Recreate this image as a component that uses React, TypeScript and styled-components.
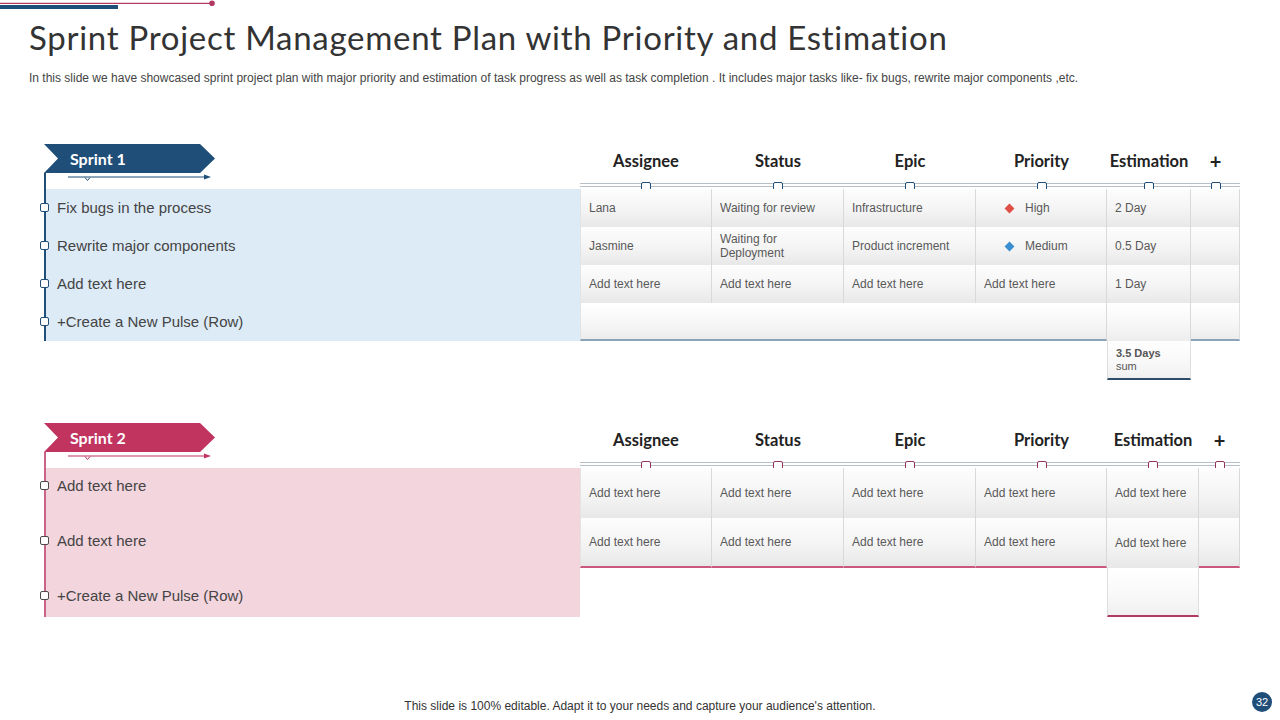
import React from 'react';
import styled, { createGlobalStyle } from 'styled-components';

const GlobalStyle = createGlobalStyle`
  html, body { margin: 0; padding: 0; background: #ffffff; }
  body { font-family: "Liberation Sans", Arial, sans-serif; }
  * { box-sizing: border-box; }
`;

type Accent = {
  main: string;
  line: string;
  bg: string;
  knob: string;
  listKnob: string;
  bottom: string;
  endLine: string;
};

const blue: Accent = {
  main: '#1f4e79',
  line: '#1f4e79',
  bg: '#ddebf7',
  knob: '#1f4e79',
  listKnob: '#1f4e79',
  bottom: '#8aa3b9',
  endLine: '#2d4d6b',
};

const pink: Accent = {
  main: '#c0345f',
  line: '#c96487',
  bg: '#f3d5de',
  knob: '#93345a',
  listKnob: '#4a4a4a',
  bottom: '#c9587c',
  endLine: '#b13a62',
};

const Page = styled.div`
  width: 1280px;
  height: 720px;
  overflow: hidden;
  display: flex;
  flex-direction: column;
  background: #fff;
`;

const Decor = styled.svg`
  display: block;
  flex: none;
`;

const Title = styled.h1`
  margin: 7px 0 0 29px;
  font-family: "Lato", "Liberation Sans", sans-serif;
  font-weight: 400;
  font-size: 33px;
  line-height: 40px;
  letter-spacing: 0.72px;
  color: #333333;
  white-space: nowrap;
`;

const Subtitle = styled.p`
  margin: 13px 0 0 29px;
  font-size: 12px;
  line-height: 16px;
  color: #444;
  white-space: nowrap;
`;

const Section = styled.section<{ $top: number }>`
  display: grid;
  grid-template-columns: 536px 660px;
  align-items: start;
  margin: ${(p) => p.$top}px 0 0 44px;
`;

const LeftCol = styled.div`
  display: flex;
  flex-direction: column;
`;

const Banner = styled.div<{ $color: string }>`
  width: 171px;
  height: 29px;
  background: ${(p) => p.$color};
  clip-path: polygon(0 0, 156px 0, 171px 50%, 156px 100%, 0 100%, 14px 50%);
  color: #fff;
  font-family: "Lato", "Liberation Sans", sans-serif;
  font-weight: 700;
  font-size: 16px;
  display: flex;
  align-items: center;
  padding-left: 26px;
`;

const Track = styled.div<{ $color: string }>`
  border-left: 2px solid ${(p) => p.$color};
`;

const PointerSvg = styled.svg`
  display: block;
`;

const List = styled.div<{ $bg: string }>`
  background: ${(p) => p.$bg};
`;

const ListRow = styled.div<{ $h: number }>`
  position: relative;
  height: ${(p) => p.$h}px;
  padding-left: 11px;
`;

const ListLabel = styled.div<{ $lh: number }>`
  font-size: 15px;
  line-height: ${(p) => p.$lh}px;
  color: #444;
`;

const ListKnob = styled.span<{ $color: string; $lh: number }>`
  position: absolute;
  left: -6px;
  top: ${(p) => p.$lh / 2 - 5}px;
  width: 9px;
  height: 9px;
  border: 1.5px solid ${(p) => p.$color};
  border-radius: 2px;
  background: #fff;
`;

const RightCol = styled.div`
  display: flex;
  flex-direction: column;
`;

const HeadRow = styled.div<{ $cols: string }>`
  display: grid;
  grid-template-columns: ${(p) => p.$cols};
  height: 38px;
`;

const HeadLabel = styled.div<{ $plus?: boolean }>`
  text-align: center;
  line-height: 34px;
  font-family: "Lato", "Liberation Sans", sans-serif;
  font-weight: 700;
  font-size: ${(p) => (p.$plus ? '20px' : '16.5px')};
  color: #222;
`;

const Rule = styled.div<{ $cols: string }>`
  display: grid;
  grid-template-columns: ${(p) => p.$cols};
  height: 7px;
  background: linear-gradient(
    to bottom,
    transparent 0,
    transparent 1px,
    #b8bec6 1px,
    #b8bec6 2px,
    transparent 2px,
    transparent 4px,
    #b8bec6 4px,
    #b8bec6 5px,
    transparent 5px
  );
`;

const RuleSlot = styled.div`
  display: flex;
  align-items: center;
  justify-content: center;
`;

const Knob = styled.span<{ $color: string }>`
  flex: none;
  width: 10px;
  height: 9px;
  border: 1.5px solid ${(p) => p.$color};
  border-radius: 2px;
  background: #fff;
`;

const Table = styled.div<{ $cols: string; $rows: string }>`
  display: grid;
  grid-template-columns: ${(p) => p.$cols};
  grid-template-rows: ${(p) => p.$rows};
`;

const Cell = styled.div<{ $bottom?: string; $first?: boolean }>`
  display: flex;
  align-items: center;
  padding: 0 7px 0 8px;
  font-size: 12px;
  line-height: 14px;
  color: #595959;
  background: linear-gradient(180deg, #fdfdfd 0%, #f4f4f4 55%, #e8e8e8 100%);
  border-right: 1px solid #d9d9d9;
  border-left: ${(p) => (p.$first ? '1px solid #e3e3e3' : '0')};
  border-bottom: ${(p) => (p.$bottom ? `2px solid ${p.$bottom}` : '0')};
`;

const PriorityCell = styled(Cell)`
  padding-left: 30px;
  gap: 12px;
`;

const Diamond = styled.span<{ $color: string }>`
  width: 7px;
  height: 7px;
  background: ${(p) => p.$color};
  transform: rotate(45deg);
`;

const WideCell = styled.div<{ $bottom: string }>`
  grid-column: span 4;
  background: linear-gradient(180deg, #ffffff 0%, #f6f6f6 60%, #ececec 100%);
  border-right: 1px solid #d9d9d9;
  border-left: 1px solid #e3e3e3;
  border-bottom: 2px solid ${(p) => p.$bottom};
`;

const EstCell = styled.div`
  background: linear-gradient(180deg, #ffffff 0%, #f6f6f6 60%, #ededed 100%);
  border-right: 1px solid #d9d9d9;
`;

const EdgeCell = styled.div<{ $bottom: string }>`
  background: linear-gradient(180deg, #ffffff 0%, #f6f6f6 60%, #ececec 100%);
  border-right: 1px solid #e0e0e0;
  border-bottom: 2px solid ${(p) => p.$bottom};
`;

const Blank = styled.div<{ $span?: number }>`
  grid-column: span ${(p) => p.$span ?? 1};
`;

const SumCell = styled.div<{ $bottom: string }>`
  display: flex;
  flex-direction: column;
  justify-content: center;
  padding: 0 8px;
  font-size: 11px;
  line-height: 13px;
  color: #555;
  background: linear-gradient(180deg, #ffffff 0%, #f8f8f8 60%, #f0f0f0 100%);
  border-left: 1px solid #dedede;
  border-right: 1px solid #dedede;
  border-bottom: 2px solid ${(p) => p.$bottom};
`;

const SumValue = styled.span`
  font-weight: 700;
`;

const Footer = styled.footer`
  display: grid;
  grid-template-columns: 1fr auto 1fr;
  align-items: start;
  margin-top: 75px;
  height: 28px;
`;

const FooterText = styled.p`
  grid-column: 2;
  margin: 6px 0 0;
  font-size: 12px;
  line-height: 16px;
  color: #333;
  white-space: nowrap;
`;

const PageBadge = styled.div`
  grid-column: 3;
  justify-self: end;
  margin-right: 8px;
  width: 20px;
  height: 20px;
  border-radius: 50%;
  background: #1f4e79;
  color: #fff;
  font-size: 11px;
  display: flex;
  align-items: center;
  justify-content: center;
`;

const Pointer = ({ color }: { color: string }) => (
  <PointerSvg width="180" height="16" viewBox="0 0 180 16">
    <line x1="22" y1="4" x2="160" y2="4" stroke={color} strokeWidth="1.2" />
    <path d="M158 1.6 L165 4 L158 6.4 Z" fill={color} />
    <path d="M39 4.5 L41.5 7.5 L44 4.5" fill="none" stroke={color} strokeWidth="1" />
  </PointerSvg>
);

const headers = ['Assignee', 'Status', 'Epic', 'Priority', 'Estimation'];

const Header = ({ cols, accent }: { cols: string; accent: Accent }) => (
  <>
    <HeadRow $cols={cols}>
      {headers.map((h) => (
        <HeadLabel key={h}>{h}</HeadLabel>
      ))}
      <HeadLabel $plus>+</HeadLabel>
    </HeadRow>
    <Rule $cols={cols}>
      {[0, 1, 2, 3, 4, 5].map((i) => (
        <RuleSlot key={i}>
          <Knob $color={accent.knob} />
        </RuleSlot>
      ))}
    </Rule>
  </>
);

type Item = { text: string; h: number; lh: number };

const SideList = ({ accent, title, items }: { accent: Accent; title: string; items: Item[] }) => (
  <LeftCol>
    <Banner $color={accent.main}>{title}</Banner>
    <Track $color={accent.line}>
      <Pointer color={accent.main} />
      <List $bg={accent.bg}>
        {items.map((it, i) => (
          <ListRow key={i} $h={it.h}>
            <ListKnob $color={accent.listKnob} $lh={it.lh} />
            <ListLabel $lh={it.lh}>{it.text}</ListLabel>
          </ListRow>
        ))}
      </List>
    </Track>
  </LeftCol>
);

const cols1 = '132px 132px 132px 131px 84px 49px';
const cols2 = '132px 132px 132px 131px 92px 41px';

export default function App() {
  return (
    <Page>
      <GlobalStyle />
      <Decor width="220" height="10" viewBox="0 0 220 10">
        <line x1="0" y1="3.3" x2="212" y2="3.3" stroke="#b23a63" strokeWidth="1.3" />
        <circle cx="212" cy="3.3" r="2.8" fill="#b23a63" />
        <rect x="0" y="5" width="118" height="4" fill="#1f4e79" />
      </Decor>
      <Title>Sprint Project Management Plan with Priority and Estimation</Title>
      <Subtitle>
        In this slide we have showcased sprint project plan with major priority and estimation of task progress as
        well as task completion . It includes major tasks like- fix bugs, rewrite major components ,etc.
      </Subtitle>

      <Section $top={58}>
        <SideList
          accent={blue}
          title="Sprint 1"
          items={[
            { text: 'Fix bugs in the process', h: 38, lh: 38 },
            { text: 'Rewrite major components', h: 38, lh: 38 },
            { text: 'Add text here', h: 38, lh: 38 },
            { text: '+Create a New Pulse (Row)', h: 38, lh: 38 },
          ]}
        />
        <RightCol>
          <Header cols={cols1} accent={blue} />
          <Table $cols={cols1} $rows="38px 38px 38px 38px 39px">
            <Cell $first>Lana</Cell>
            <Cell>Waiting for review</Cell>
            <Cell>Infrastructure</Cell>
            <PriorityCell>
              <Diamond $color="#df4f46" />
              High
            </PriorityCell>
            <Cell>2 Day</Cell>
            <Cell />

            <Cell $first>Jasmine</Cell>
            <Cell>
              Waiting for
              <br />
              Deployment
            </Cell>
            <Cell>Product increment</Cell>
            <PriorityCell>
              <Diamond $color="#3b8fd0" />
              Medium
            </PriorityCell>
            <Cell>0.5 Day</Cell>
            <Cell />

            <Cell $first>Add text here</Cell>
            <Cell>Add text here</Cell>
            <Cell>Add text here</Cell>
            <Cell>Add text here</Cell>
            <Cell>1 Day</Cell>
            <Cell />

            <WideCell $bottom={blue.bottom} />
            <EstCell />
            <EdgeCell $bottom={blue.bottom} />

            <Blank $span={4} />
            <SumCell $bottom={blue.endLine}>
              <SumValue>3.5 Days</SumValue>
              <span>sum</span>
            </SumCell>
            <Blank />
          </Table>
        </RightCol>
      </Section>

      <Section $top={43}>
        <SideList
          accent={pink}
          title="Sprint 2"
          items={[
            { text: 'Add text here', h: 55, lh: 36 },
            { text: 'Add text here', h: 55, lh: 36 },
            { text: '+Create a New Pulse (Row)', h: 39, lh: 36 },
          ]}
        />
        <RightCol>
          <Header cols={cols2} accent={pink} />
          <Table $cols={cols2} $rows="50px 50px 49px">
            <Cell $first>Add text here</Cell>
            <Cell>Add text here</Cell>
            <Cell>Add text here</Cell>
            <Cell>Add text here</Cell>
            <Cell>Add text here</Cell>
            <Cell />

            <Cell $first $bottom={pink.bottom}>Add text here</Cell>
            <Cell $bottom={pink.bottom}>Add text here</Cell>
            <Cell $bottom={pink.bottom}>Add text here</Cell>
            <Cell $bottom={pink.bottom}>Add text here</Cell>
            <Cell>Add text here</Cell>
            <Cell $bottom={pink.bottom} />

            <Blank $span={4} />
            <SumCell $bottom={pink.endLine} />
            <Blank />
          </Table>
        </RightCol>
      </Section>

      <Footer>
        <FooterText>This slide is 100% editable. Adapt it to your needs and capture your audience's attention.</FooterText>
        <PageBadge>32</PageBadge>
      </Footer>
    </Page>
  );
}
